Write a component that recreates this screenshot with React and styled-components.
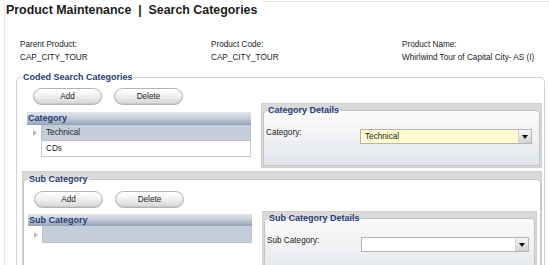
import React from "react"
import styled, { createGlobalStyle } from "styled-components"

const FONT = `"Liberation Sans", Arial, sans-serif`
const NAVY = "#1f3c76"

const GlobalStyle = createGlobalStyle`
	html, body {
		margin: 0;
		background: #fff;
	}
	body {
		font-family: ${FONT};
		font-size: 8.2px;
		color: #222;
	}
`

const Page = styled.div`
	width: 544px;
	height: 265px;
	margin-left: 4px;
	border-left: 1px solid #e3e8ec;
	overflow: hidden;
`

const Header = styled.header`
	display: flex;
	align-items: flex-start;
`

const Title = styled.h1`
	margin: 0;
	padding: 1px 6px 0 1px;
	font: bold 12.4px/18px ${FONT};
	color: #1b1b1b;
	white-space: nowrap;
`

const HeaderRule = styled.span`
	flex: 1;
	margin-top: 1px;
	border-top: 1px solid #d8e2e8;
`

const InfoGrid = styled.div`
	display: grid;
	grid-template-columns: repeat(3, 191px);
	padding: 19px 0 0 15px;
	line-height: 13px;
`

const InfoItem = styled.div`
	display: flex;
	flex-direction: column;
	white-space: nowrap;
`

const Fieldset = styled.fieldset`
	margin: 7px 4px 0 11px;
	padding: 0 2px 0 5px;
	min-width: 0;
	border: 1px solid #d4d4d4;
	border-bottom: none;
	border-radius: 5px 5px 0 0;
`

const Legend = styled.legend`
	padding: 0 1px;
	margin-left: ${p => p.$offset || 0}px;
	font: bold 9px/12px ${FONT};
	color: ${NAVY};
	white-space: nowrap;
`

const Section = styled.div`
	display: flex;
	gap: 10px;
	padding: ${p => p.$top}px 0 0 ${p => p.$left}px;
`

const LeftCol = styled.div`
	width: 224px;
	flex: none;
`

const RightCol = styled.div`
	flex: 1;
	min-width: 0;
	margin-top: ${p => p.$top}px;
`

const ButtonRow = styled.div`
	display: flex;
	gap: 12px;
	padding-left: 6px;
`

const Button = styled.button`
	width: 69px;
	height: 17px;
	padding: 0;
	border: 1px solid #b3b3b3;
	border-radius: 9px;
	background: linear-gradient(#ffffff, #f1f1f1 45%, #d5d5d5);
	box-shadow: inset 0 -1px 0 #c9c9c9;
	font: 8.2px/15px ${FONT};
	color: #222;
`

const Table = styled.div`
	margin-top: ${p => p.$top}px;
`

const TableHeader = styled.div`
	height: ${p => p.$h}px;
	padding-left: 1px;
	background: linear-gradient(#e0e5eb 0%, #c7d0db 45%, #93a1b5 100%);
	font: bold 9px/${p => p.$h}px ${FONT};
	color: ${NAVY};
`

const Row = styled.div`
	display: flex;
	height: ${p => p.$h}px;
`

const Gutter = styled.div`
	width: 14px;
	flex: none;
	display: flex;
	align-items: center;
	padding-left: 6px;
	box-sizing: border-box;
`

const Arrow = styled.span`
	width: 0;
	height: 0;
	border-top: 3px solid transparent;
	border-bottom: 3px solid transparent;
	border-left: 4px solid #b9b9b9;
`

const Cell = styled.div`
	flex: 1;
	padding-left: 4px;
	border: 1px solid ${p => (p.$selected ? "#b9c4d2" : "#c2c9d2")};
	border-top: none;
	background: ${p => (p.$selected ? "#c4cedb" : "#fff")};
	display: flex;
	align-items: center;
`

const SubPanel = styled.div`
	margin-top: 3px;
	padding-top: 1px;
	border: 1px solid #cfcfcf;
	border-bottom: none;
	background: #d9d9d9;
`

const SubFieldset = styled.fieldset`
	margin: 0;
	padding: 0 3px 40px 3px;
	min-width: 0;
	border: 1px solid #c6c6c6;
	border-bottom: none;
	border-radius: 4px 4px 0 0;
	background: #fff;
`

const Box = styled.div`
	border: 1px solid #cfcfcf;
	background: #d9d9d9;
	padding: 0 1px 1px;
`

const BoxFieldset = styled.fieldset`
	margin: 0;
	padding: 13px 5px 21px 2px;
	min-width: 0;
	border: 1px solid #c3c3c3;
	border-radius: 4px 4px 0 0;
	background: linear-gradient(#fbfbfb, #f1f2f4 45%, #e2e6ec);
`

const FieldRow = styled.div`
	display: flex;
	align-items: flex-start;
`

const FieldLabel = styled.span`
	width: 94px;
	flex: none;
	line-height: 10px;
	margin-top: -1px;
	white-space: nowrap;
`

const Select = styled.div`
	width: 172px;
	height: 15px;
	box-sizing: border-box;
	display: flex;
	border: 1px solid #b5b5b5;
	background: ${p => (p.$highlight ? "#fffdcf" : "#fff")};
`

const SelectValue = styled.span`
	flex: 1;
	padding-left: 4px;
	line-height: 13px;
`

const SelectButton = styled.span`
	width: 12px;
	flex: none;
	display: flex;
	align-items: center;
	justify-content: center;
	border-left: 1px solid #d3d3d3;
	background: linear-gradient(#f7f7f7, #d2d2d2);
`

const Caret = styled.span`
	width: 0;
	height: 0;
	border-left: 3px solid transparent;
	border-right: 3px solid transparent;
	border-top: 4px solid #111;
`

const Dropdown = ({ value, highlight }) => (
	<Select $highlight={highlight}>
		<SelectValue>{value}</SelectValue>
		<SelectButton>
			<Caret />
		</SelectButton>
	</Select>
)

const DetailsBox = ({ title, label, value, highlight }) => (
	<Box>
		<BoxFieldset>
			<Legend $offset={1}>{title}</Legend>
			<FieldRow>
				<FieldLabel>{label}</FieldLabel>
				<Dropdown value={value} highlight={highlight} />
			</FieldRow>
		</BoxFieldset>
	</Box>
)

const Buttons = () => (
	<ButtonRow>
		<Button>Add</Button>
		<Button>Delete</Button>
	</ButtonRow>
)

const info = [
	["Parent Product:", "CAP_CITY_TOUR"],
	["Product Code:", "CAP_CITY_TOUR"],
	["Product Name:", "Whirlwind Tour of Capital City- AS (I)"],
]

const categories = [
	{ name: "Technical", selected: true },
	{ name: "CDs", selected: false },
]

export default function App() {
	return (
		<>
			<GlobalStyle />
			<Page>
				<Header>
					<Title>Product Maintenance &nbsp;|&nbsp; Search Categories</Title>
					<HeaderRule />
				</Header>

				<InfoGrid>
					{info.map(([label, value]) => (
						<InfoItem key={label}>
							<span>{label}</span>
							<span>{value}</span>
						</InfoItem>
					))}
				</InfoGrid>

				<Fieldset>
					<Legend>Coded Search Categories</Legend>

					<Section $top={5} $left={5}>
						<LeftCol>
							<Buttons />
							<Table $top={7}>
								<TableHeader $h={13}>Category</TableHeader>
								{categories.map(c => (
									<Row key={c.name} $h={16}>
										<Gutter>{c.selected && <Arrow />}</Gutter>
										<Cell $selected={c.selected}>{c.name}</Cell>
									</Row>
								))}
							</Table>
						</LeftCol>
						<RightCol $top={15}>
							<DetailsBox title="Category Details" label="Category:" value="Technical" highlight />
						</RightCol>
					</Section>

					<SubPanel>
						<SubFieldset>
							<Legend $offset={1}>Sub Category</Legend>
							<Section $top={6} $left={1}>
								<LeftCol>
									<Buttons />
									<Table $top={6}>
										<TableHeader $h={12}>Sub Category</TableHeader>
										<Row $h={17}>
											<Gutter>
												<Arrow />
											</Gutter>
											<Cell $selected />
										</Row>
									</Table>
								</LeftCol>
								<RightCol $top={20}>
									<DetailsBox title="Sub Category Details" label="Sub Category:" value="" />
								</RightCol>
							</Section>
						</SubFieldset>
					</SubPanel>
				</Fieldset>
			</Page>
		</>
	)
}
